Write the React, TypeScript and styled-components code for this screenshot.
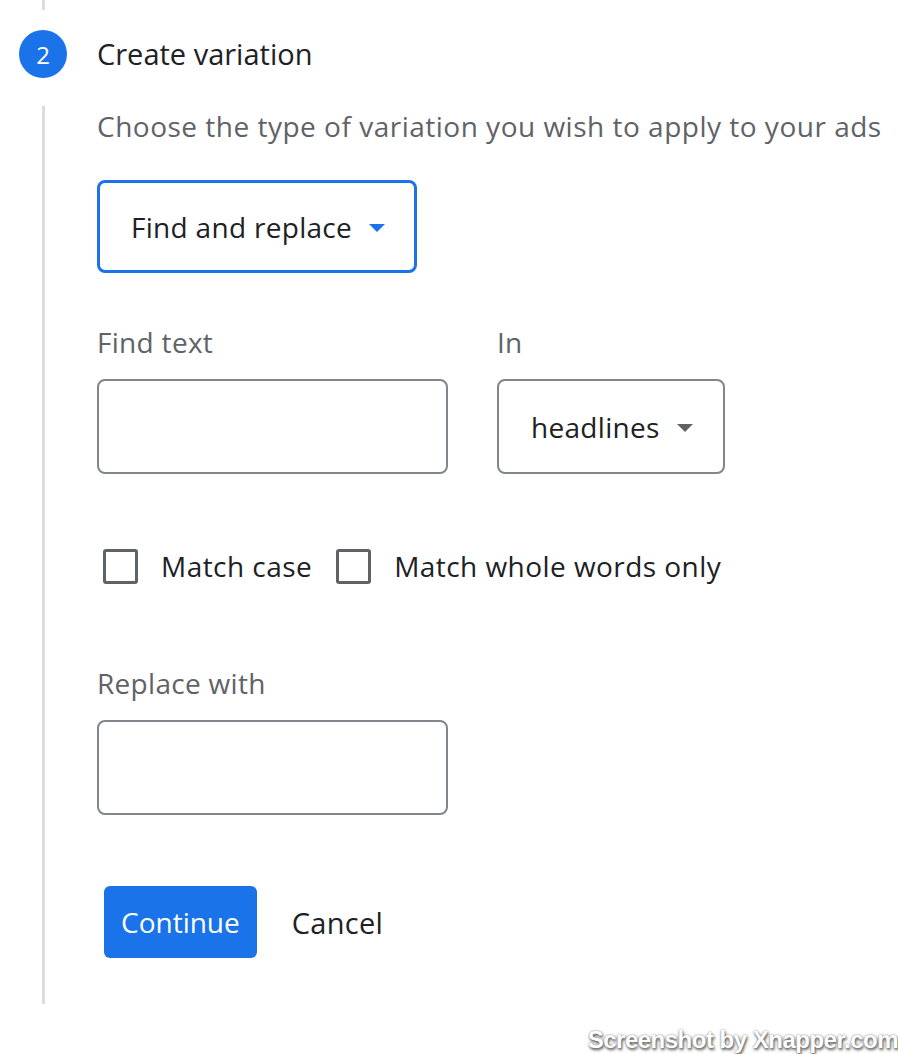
import React from "react";
import styled, { createGlobalStyle } from "styled-components";

const Global = createGlobalStyle`
  html, body { margin: 0; padding: 0; background: #fff; }
  body { font-family: "Open Sans", Roboto, sans-serif; }
`;

const Page = styled.div`
  position: relative;
  width: 898px;
  height: 1054px;
  overflow: hidden;
  background: #fff;
`;

const Step = styled.div`
  display: grid;
  grid-template-columns: 86px 1fr;
`;

const Rail = styled.div`
  display: flex;
  flex-direction: column;
  align-items: center;
`;

const RailLine = styled.div<{ $h: number }>`
  width: 3px;
  height: ${(p) => p.$h}px;
  background: #dadce0;
`;

const Circle = styled.div`
  width: 48px;
  height: 48px;
  border-radius: 50%;
  background: #1a73e8;
  color: #fff;
  display: flex;
  align-items: center;
  justify-content: center;
  font-size: 24px;
  font-weight: 500;
  margin: 20px 0 28px;
`;

const Content = styled.div`
  display: flex;
  flex-direction: column;
  padding-left: 11px;
`;

const Title = styled.div`
  height: 108px;
  display: flex;
  align-items: center;
  font-size: 29px;
  color: #202124;
  margin-top: -1px;
`;

const Subtitle = styled.div`
  font-size: 28px;
  color: #5f6368;
  line-height: 38px;
  letter-spacing: 0.5px;
`;

const SelectWrap = styled.div`
  margin-top: 35px;
`;

const SelectBox = styled.div<{ $focused?: boolean; $w: number }>`
  box-sizing: border-box;
  width: ${(p) => p.$w}px;
  height: ${(p) => (p.$focused ? 93 : 95)}px;
  border: ${(p) => (p.$focused ? "3px solid #1a73e8" : "2px solid #80868b")};
  border-radius: 8px;
  display: flex;
  align-items: center;
  padding-left: ${(p) => (p.$focused ? 31 : 32)}px;
  gap: 17px;
  font-size: 28px;
  letter-spacing: 0.3px;
  color: #202124;
`;

const Caret = styled.span<{ $color: string }>`
  width: 0;
  height: 0;
  border-left: 8px solid transparent;
  border-right: 8px solid transparent;
  border-top: 8px solid ${(p) => p.$color};
  margin-top: 2px;
`;

const Fields = styled.div`
  display: flex;
  gap: 49px;
  margin-top: 50px;
`;

const Field = styled.div`
  display: flex;
  flex-direction: column;
`;

const Label = styled.div`
  font-size: 28px;
  color: #5f6368;
  line-height: 38px;
  margin-bottom: 18px;
  letter-spacing: 0.3px;
`;

const TextInput = styled.div<{ $w: number }>`
  box-sizing: border-box;
  width: ${(p) => p.$w}px;
  height: 95px;
  border: 2px solid #80868b;
  border-radius: 8px;
`;

const Checks = styled.div`
  display: flex;
  align-items: center;
  margin-top: 73px;
  padding-left: 6px;
`;

const Check = styled.label`
  display: flex;
  align-items: center;
  font-size: 28px;
  letter-spacing: 0.45px;
  color: #202124;
  margin-right: 24px;
`;

const Box = styled.span`
  box-sizing: border-box;
  width: 35px;
  height: 35px;
  border: 3px solid #5f6368;
  border-radius: 3px;
  margin-right: 23px;
`;

const ReplaceField = styled(Field)`
  margin-top: 79px;
`;

const Actions = styled.div`
  display: flex;
  align-items: center;
  margin-top: 71px;
  padding-left: 7px;
  gap: 35px;
`;

const Primary = styled.button`
  height: 72px;
  padding: 0 17px;
  border: none;
  border-radius: 6px;
  background: #1a73e8;
  color: #fff;
  font-family: "Open Sans", Roboto, sans-serif;
  font-size: 28px;
  font-weight: 500;
`;

const TextButton = styled.button`
  border: none;
  background: none;
  padding: 0;
  color: #202124;
  font-family: "Open Sans", Roboto, sans-serif;
  font-size: 29px;
  font-weight: 500;
  letter-spacing: 0.3px;
`;

const Watermark = styled.div`
  position: absolute;
  right: 0;
  bottom: 0;
  font-family: "Liberation Sans", Arial, sans-serif;
  font-weight: bold;
  font-size: 24px;
  color: #fff;
  text-shadow: 1px 2px 3px #555, 0 0 2px #777;
  letter-spacing: -0.5px;
`;

export default function App() {
  return (
    <Page>
      <Global />
      <Step>
        <Rail>
          <RailLine $h={10} />
          <Circle>2</Circle>
          <RailLine $h={898} />
        </Rail>
        <Content>
          <Title>Create variation</Title>
          <Subtitle>Choose the type of variation you wish to apply to your ads</Subtitle>
          <SelectWrap>
            <SelectBox $focused $w={320}>
              Find and replace <Caret $color="#1a73e8" />
            </SelectBox>
          </SelectWrap>
          <Fields>
            <Field>
              <Label>Find text</Label>
              <TextInput $w={351} />
            </Field>
            <Field>
              <Label>In</Label>
              <SelectBox $w={228}>
                headlines <Caret $color="#5f6368" />
              </SelectBox>
            </Field>
          </Fields>
          <Checks>
            <Check>
              <Box />
              Match case
            </Check>
            <Check>
              <Box />
              Match whole words only
            </Check>
          </Checks>
          <ReplaceField>
            <Label>Replace with</Label>
            <TextInput $w={351} />
          </ReplaceField>
          <Actions>
            <Primary>Continue</Primary>
            <TextButton>Cancel</TextButton>
          </Actions>
        </Content>
      </Step>
      <Watermark>Screenshot by Xnapper.com</Watermark>
    </Page>
  );
}
